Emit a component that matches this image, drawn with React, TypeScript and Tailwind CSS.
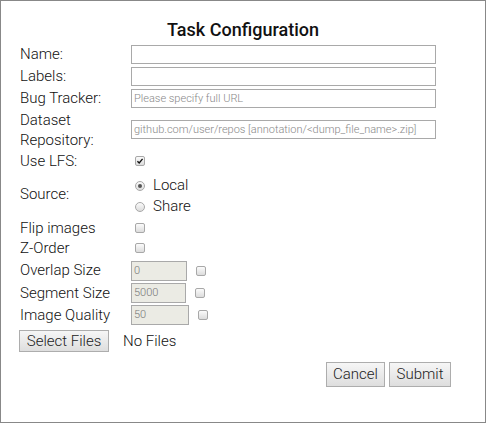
type NumField = {
  label: string;
  value: string;
  width: string;
  h: string;
};

const numFields: NumField[] = [
  { label: 'Overlap Size', value: '0', width: 'w-[56px]', h: 'h-[23px]' },
  { label: 'Segment Size', value: '5000', width: 'w-[55px]', h: 'h-[21px]' },
  { label: 'Image Quality', value: '50', width: 'w-[58px]', h: 'h-[24px]' },
];

const Box = ({ checked = false }: { checked?: boolean }) => (
  <span className="flex h-[10px] w-[10px] items-center justify-center rounded-[2px] border border-[#a8a8a8] bg-gradient-to-b from-[#fbfbfb] to-[#dcdcdc]">
    {checked && (
      <svg viewBox="0 0 10 10" className="h-[8px] w-[8px]">
        <path d="M1.8 5.2 L4 7.4 L8.2 2.4" fill="none" stroke="#111" strokeWidth="1.7" />
      </svg>
    )}
  </span>
);

const Radio = ({ checked = false }: { checked?: boolean }) => (
  <span className="flex h-[10px] w-[10px] items-center justify-center rounded-full border border-[#a8a8a8] bg-gradient-to-b from-[#fbfbfb] to-[#dcdcdc]">
    {checked && <span className="h-[4px] w-[4px] rounded-full bg-[#555]" />}
  </span>
);

const Row = ({ label, h, children }: { label: string; h: string; children?: React.ReactNode }) => (
  <div className={`grid grid-cols-[111px_1fr] items-center ${h}`}>
    <span>{label}</span>
    <div className="flex items-center">{children}</div>
  </div>
);

const textInput =
  'h-[19px] w-[305px] border border-[#a9a9a9] bg-white px-[2px] text-[11px] text-[#888] leading-[17px]';

const btn =
  'border border-[#adadad] bg-gradient-to-b from-[#f6f6f6] to-[#dedede] text-[15px] font-light text-[#222]';

export default function App() {
  return (
    <div className="h-[423px] w-[486px] border border-[#888] bg-white font-['Roboto',sans-serif] text-[15px] font-light text-[#111]">
      <div className="px-[19px] pt-[16px]">
        <h1 className="h-[26px] text-center text-[18px] font-medium leading-[25px] text-[#111]">
          Task Configuration
        </h1>

        <Row label="Name:" h="h-[22px]">
          <div className={textInput} />
        </Row>
        <Row label="Labels:" h="h-[22px]">
          <div className={textInput} />
        </Row>
        <Row label="Bug Tracker:" h="h-[22px]">
          <div className={textInput}>Please specify full URL</div>
        </Row>

        <div className="grid h-[41px] grid-cols-[111px_1fr] items-center">
          <span className="leading-[20px]">
            Dataset
            <br />
            Repository:
          </span>
          <div className={textInput}>github.com/user/repos [annotation/&lt;dump_file_name&gt;.zip]</div>
        </div>

        <Row label="Use LFS:" h="h-[22px]">
          <span className="pl-[4px]">
            <Box checked />
          </span>
        </Row>

        <div className="grid h-[45px] grid-cols-[111px_1fr] items-center">
          <span>Source:</span>
          <div className="flex flex-col pt-[3px] pl-[4px]">
            <label className="flex h-[21px] items-center gap-[8px]">
              <Radio checked />
              Local
            </label>
            <label className="flex h-[21px] items-center gap-[8px]">
              <Radio />
              Share
            </label>
          </div>
        </div>

        <Row label="Flip images" h="h-[20px]">
          <span className="pl-[4px]">
            <Box />
          </span>
        </Row>
        <Row label="Z-Order" h="h-[22px]">
          <span className="pl-[4px]">
            <Box />
          </span>
        </Row>

        {numFields.map((f) => (
          <Row key={f.label} label={f.label} h={f.h}>
            <div
              className={`h-[20px] ${f.width} border border-[#a9a9a9] bg-[#ebebe4] px-[2px] text-[11px] leading-[18px] text-[#777]`}
            >
              {f.value}
            </div>
            <span className="pl-[9px]">
              <Box />
            </span>
          </Row>
        ))}

        <div className="mt-[3px] flex items-center gap-[14px]">
          <button className={`-ml-[1px] h-[22px] w-[90px] leading-[20px] ${btn}`}>Select Files</button>
          <span>No Files</span>
        </div>

        <div className="mt-[9px] flex justify-end gap-[4px] pr-[15px]">
          <button className={`h-[25px] w-[59px] ${btn}`}>Cancel</button>
          <button className={`h-[25px] w-[62px] ${btn}`}>Submit</button>
        </div>
      </div>
    </div>
  );
}
